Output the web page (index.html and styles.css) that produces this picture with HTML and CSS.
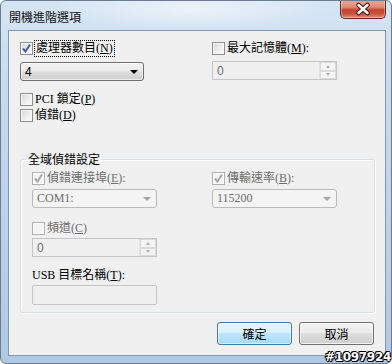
FILE: index.html
```html
<!DOCTYPE html>
<html lang="zh-Hant">
<head>
  <meta charset="UTF-8" />
  <title>開機進階選項</title>
  <link rel="stylesheet" href="styles.css">
</head>
<body>
  <div class="window">
    <div class="titlebar">
      <span class="title">開機進階選項</span>
      <div class="close-btn">
        <svg width="44" height="18" viewBox="0 0 44 18">
          <path d="M17.5 5 L26.5 13 M26.5 5 L17.5 13" stroke="#3a1a16" stroke-width="4.5" stroke-linecap="round"/>
          <path d="M17.5 5 L26.5 13 M26.5 5 L17.5 13" stroke="#fff" stroke-width="2.4" stroke-linecap="round"/>
        </svg>
      </div>
    </div>

    <div class="client">
      <!-- processors / max memory -->
      <div class="pair">
        <label class="check">
          <span class="box checked"><svg viewBox="0 0 11 11"><path d="M2 5.5 L4.5 8.5 L9 1.5" /></svg></span>
          <span class="focus">處理器數目(<u>N</u>)</span>
        </label>
        <label class="check">
          <span class="box"></span>
          <span>最大記憶體(<u>M</u>):</span>
        </label>
        <div class="combo combo-main"><span class="value">4</span><span class="arrow"></span></div>
        <div class="spin disabled"><span class="value">0</span><span class="spin-btns"><i class="up"></i><i class="down"></i></span></div>
      </div>

      <label class="check opt-pci"><span class="box"></span><span>PCI 鎖定(<u>P</u>)</span></label>
      <label class="check opt-debug"><span class="box"></span><span>偵錯(<u>D</u>)</span></label>

      <!-- global debug settings -->
      <fieldset class="group">
        <legend>全域偵錯設定</legend>
        <div class="pair group-pair">
          <label class="check disabled">
            <span class="box checked"><svg viewBox="0 0 11 11"><path d="M2 5.5 L4.5 8.5 L9 1.5" /></svg></span>
            <span>偵錯連接埠(<u>E</u>):</span>
          </label>
          <label class="check disabled">
            <span class="box checked"><svg viewBox="0 0 11 11"><path d="M2 5.5 L4.5 8.5 L9 1.5" /></svg></span>
            <span>傳輸速率(<u>B</u>):</span>
          </label>
          <div class="combo disabled"><span class="value">COM1:</span><span class="arrow"></span></div>
          <div class="combo disabled"><span class="value">115200</span><span class="arrow"></span></div>
        </div>

        <label class="check disabled opt-channel"><span class="box"></span><span>頻道(<u>C</u>)</span></label>
        <div class="spin disabled spin-channel"><span class="value">0</span><span class="spin-btns"><i class="up"></i><i class="down"></i></span></div>

        <div class="field-label">USB 目標名稱(<u>T</u>):</div>
        <div class="textbox"></div>
      </fieldset>

      <div class="buttons">
        <button class="btn default">確定</button>
        <button class="btn">取消</button>
      </div>
    </div>

    <div class="watermark">#1097924</div>
  </div>
</body>
</html>
```

FILE: styles.css
```css
* { box-sizing: border-box; }
body {
  margin: 0;
  background: #fff;
  font-family: "Liberation Serif", "Noto Sans CJK TC", serif;
  font-size: 12px;
  color: #000;
}
u { text-decoration: underline; text-underline-offset: 1px; }

.window {
  position: relative;
  width: 392px;
  height: 364px;
  border: 1px solid #6e7d8e;
  border-radius: 6px;
  overflow: hidden;
  background:
    radial-gradient(ellipse 140px 22px at 190px 8px, rgba(255,255,255,0.55), rgba(255,255,255,0)),
    linear-gradient(180deg, #d6e5f4 0%, #c7daee 25%, #bcd2ea 60%, #afc8e4 100%);
}
.titlebar {
  height: 29px;
  display: flex;
  justify-content: space-between;
  align-items: flex-start;
}
.title {
  font-family: "Noto Sans CJK TC", sans-serif;
  font-size: 12px;
  line-height: 14px;
  padding: 9px 0 0 8px;
  color: #111;
}
.close-btn {
  width: 46px;
  height: 19px;
  margin: -1px 5px 0 0;
  border: 1px solid #5e2a22;
  border-top: none;
  border-radius: 0 0 5px 5px;
  background: linear-gradient(180deg, #eaa998 0%, #dc8a76 40%, #c5432f 55%, #c9503a 75%, #dd8f73 100%);
  box-shadow: inset 0 0 0 1px rgba(255,255,255,0.35);
  display: flex;
  align-items: center;
  justify-content: center;
}

.client {
  width: 378px;
  height: 326px;
  margin-left: 7px;
  border: 1px solid #8396ab;
  background: #f0f0f0;
  padding: 10px 11px 0 11px;
  display: flex;
  flex-direction: column;
  align-items: flex-start;
}

.pair {
  display: grid;
  grid-template-columns: 192px 125px;
  align-items: start;
}

.check {
  display: flex;
  align-items: center;
  gap: 2px;
  height: 15px;
  line-height: 15px;
  white-space: nowrap;
}
.check.disabled { color: #6d6d6d; }
.box {
  width: 13px;
  height: 13px;
  flex: none;
  border: 1px solid #8e8f8f;
  background: linear-gradient(135deg, #d4d6d9 0%, #eeeeee 55%, #fbfbfb 100%);
  box-shadow: inset 0 0 0 1px #f6f6f6;
  display: flex;
  align-items: center;
  justify-content: center;
}
.box svg { width: 11px; height: 11px; }
.box svg path {
  fill: none;
  stroke: #4a5f97;
  stroke-width: 2;
}
.check.disabled .box {
  border-color: #b1b1b1;
  background: #f4f4f4;
  box-shadow: inset 0 0 0 1px #fff;
}
.check.disabled .box svg path { stroke: #a8a8a8; }
.focus {
  outline: 1px dotted #000;
  outline-offset: 0;
  padding: 0 1px;
}

.combo {
  width: 125px;
  height: 19px;
  margin-top: 6px;
  border: 1px solid #707070;
  border-radius: 3px;
  background: linear-gradient(180deg, #f2f2f2 0%, #ebebeb 48%, #dddddd 52%, #cfcfcf 100%);
  box-shadow: inset 0 0 0 1px rgba(255,255,255,0.6);
  display: flex;
  align-items: center;
  justify-content: space-between;
  padding: 0 5px 0 4px;
  font-family: "Liberation Sans", "Noto Sans CJK TC", sans-serif;
}
.combo-main { width: 124px; }
.arrow {
  width: 0;
  height: 0;
  border-left: 4px solid transparent;
  border-right: 4px solid transparent;
  border-top: 4px solid #000;
}
.combo.disabled {
  margin-top: 3px;
  border-color: #b7bbbf;
  background: #f4f4f4;
  box-shadow: none;
  color: #6d6d6d;
  font-family: "Liberation Serif", "Noto Sans CJK TC", serif;
}
.combo.disabled .arrow { border-top-color: #a6a6a6; }

.spin {
  width: 125px;
  height: 19px;
  margin-top: 5px;
  border: 1px solid #c2c6ca;
  background: #f0f0f0;
  display: flex;
  align-items: center;
  justify-content: space-between;
  padding-left: 4px;
  color: #6d6d6d;
  font-family: "Liberation Sans", sans-serif;
}
.spin-btns {
  width: 17px;
  height: 17px;
  display: flex;
  flex-direction: column;
  border-left: 1px solid #e2e2e2;
}
.spin-btns i {
  flex: 1;
  background: #f4f4f4;
  border: 1px solid #dadada;
  display: flex;
  align-items: center;
  justify-content: center;
}
.spin-btns i::after {
  content: "";
  width: 0;
  height: 0;
  border-left: 2.5px solid transparent;
  border-right: 2.5px solid transparent;
}
.spin-btns .up::after { border-bottom: 3px solid #b0b0b0; }
.spin-btns .down::after { border-top: 3px solid #b0b0b0; }

.opt-pci { margin-top: 11px; }
.opt-debug { margin-top: 1px; }

.group {
  width: 355px;
  margin: 29px 0 0 0;
  padding: 5px 10px 7px 11px;
  border: 1px solid #d5dfe5;
  border-radius: 3px;
  box-shadow: inset 1px 1px 0 #fff, 1px 1px 0 #fff;
  min-width: 0;
}
.group legend {
  margin-left: -6px;
  padding: 0 2px;
  line-height: 14px;
  font-family: "Noto Sans CJK TC", sans-serif;
}
.group-pair { grid-template-columns: 180px 125px; }
.opt-channel { margin-top: 13px; }
.spin-channel { margin-top: 2px; }
.field-label {
  margin-top: 11px;
  height: 15px;
  line-height: 15px;
}
.textbox {
  width: 125px;
  height: 20px;
  margin-top: 2px;
  border: 1px solid #c2c6ca;
  border-radius: 2px;
  background: #f0f0f0;
}

.buttons {
  align-self: flex-end;
  margin-top: 9px;
  display: flex;
  gap: 7px;
}
.btn {
  width: 75px;
  height: 23px;
  padding: 0;
  border: 1px solid #707070;
  border-radius: 3px;
  background: linear-gradient(180deg, #f2f2f2 0%, #ebebeb 45%, #dddddd 50%, #cfcfcf 100%);
  box-shadow: inset 0 0 0 1px rgba(255,255,255,0.7);
  font-family: "Noto Sans CJK TC", sans-serif;
  font-size: 12px;
  color: #000;
}
.btn.default {
  border-color: #3c7fb1;
  background: linear-gradient(180deg, #eaf6fd 0%, #d9f0fc 45%, #bee6fd 50%, #a7d9f5 100%);
  box-shadow: inset 0 0 0 1px rgba(255,255,255,0.5);
}

.watermark {
  position: absolute;
  right: 0;
  bottom: -1px;
  font-family: "DejaVu Sans", sans-serif;
  font-weight: bold;
  font-size: 12px;
  letter-spacing: -0.3px;
  color: #fff;
  text-shadow: -1px 0 #000, 1px 0 #000, 0 -1px #000, 0 1px #000, 1px 1px #000, -1px -1px #000;
}
```
